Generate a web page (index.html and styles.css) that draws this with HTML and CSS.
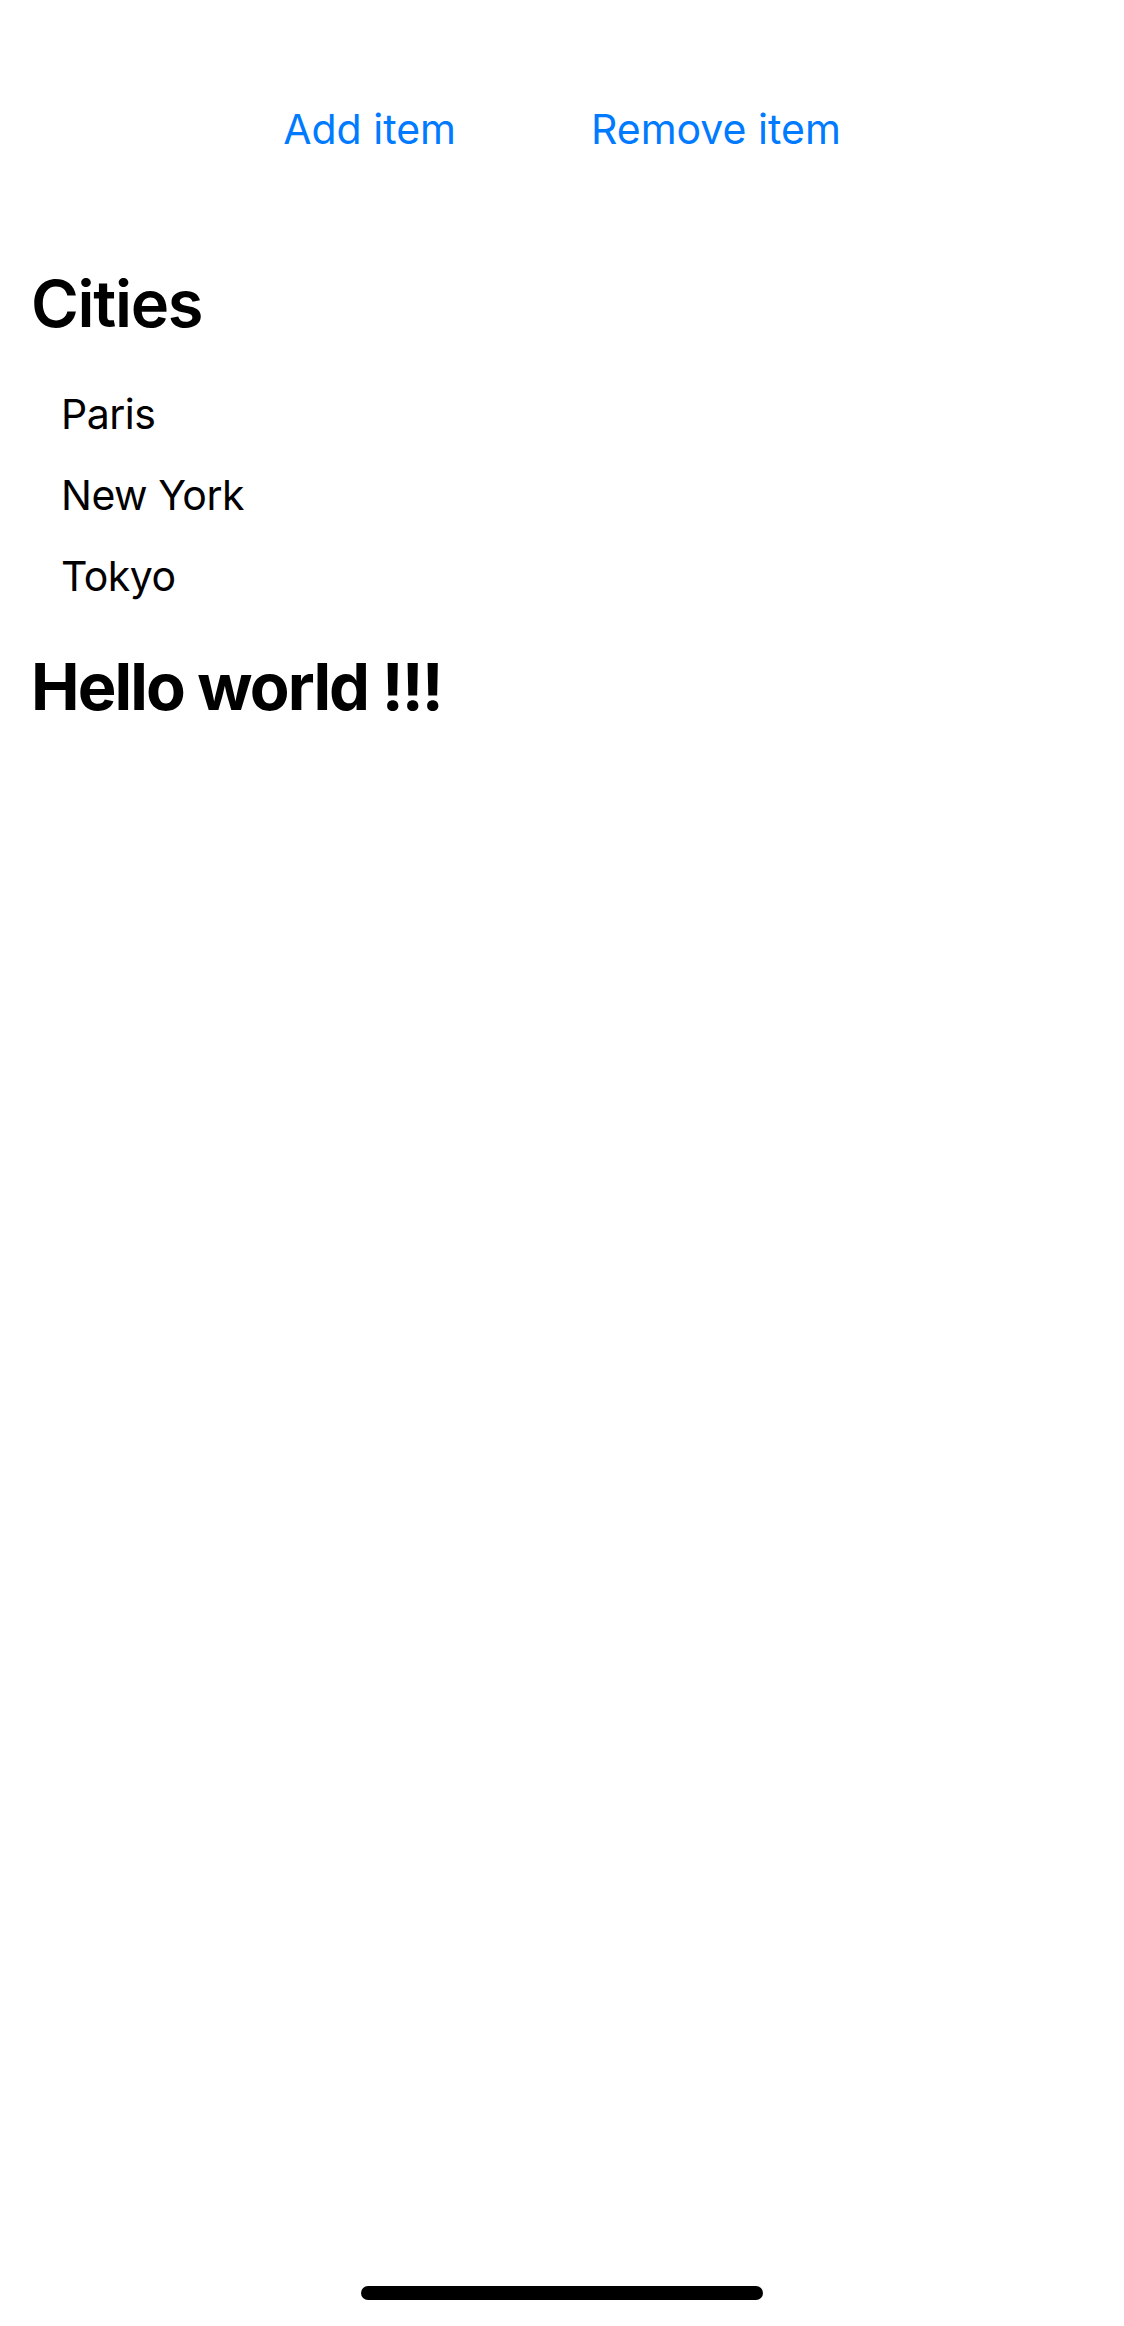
FILE: index.html
```html
<!DOCTYPE html>
<html lang="en">
<head>
<meta charset="utf-8">
<title>Cities</title>
<link rel="stylesheet" href="styles.css">
</head>
<body>
<div class="screen">
  <div class="toolbar">
    <button class="link-btn" type="button">Add item</button>
    <button class="link-btn" type="button">Remove item</button>
  </div>
  <h2 class="title">Cities</h2>
  <ul class="city-list">
    <li class="city">Paris</li>
    <li class="city">New York</li>
    <li class="city">Tokyo</li>
  </ul>
  <h1 class="title hello">Hello world !!!</h1>
  <div class="home-indicator"></div>
</div>
</body>
</html>
```
FILE: styles.css
```css
html, body {
  margin: 0;
  padding: 0;
  background: #ffffff;
}

body {
  font-family: Inter, "Noto Sans", "Liberation Sans", sans-serif;
  color: #000000;
}

.screen {
  min-height: 2326px;
  display: flex;
  flex-direction: column;
  box-sizing: border-box;
}

.toolbar {
  display: flex;
  justify-content: center;
  gap: 135px;
  padding-top: 104px;
}

.link-btn {
  font-family: inherit;
  font-size: 41px;
  line-height: 50px;
  color: #007aff;
  background: none;
  border: none;
  padding: 0;
  margin: 0;
  letter-spacing: 0;
}

.title {
  font-size: 65px;
  line-height: 80px;
  font-weight: 600;
  letter-spacing: -1.3px;
  margin: 110px 0 0 31px;
}

.city-list {
  list-style: none;
  margin: 30px 0 0 0;
  padding: 0 0 0 61px;
}

.city {
  font-size: 41px;
  line-height: 81px;
  letter-spacing: -0.5px;
}

.hello {
  font-weight: 700;
  letter-spacing: -1.9px;
  margin-top: 30px;
}

.home-indicator {
  margin: auto auto 26px auto;
  width: 402px;
  height: 14px;
  border-radius: 7px;
  background: #000000;
}
```
